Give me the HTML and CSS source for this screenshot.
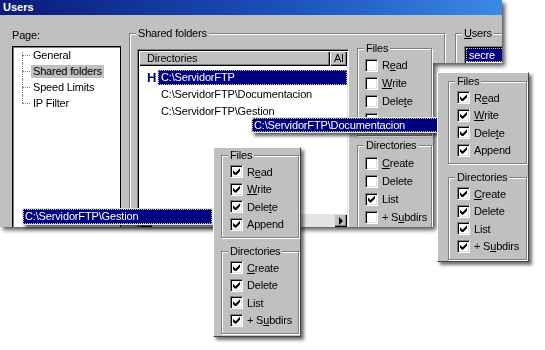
FILE: index.html
```html
<!DOCTYPE html>
<html lang="es">
<head>
  <meta charset="UTF-8">
  <title>Users</title>
  <link rel="stylesheet" href="styles.css">
</head>
<body>
  <div class="window-wrap">
    <div class="window">
      <div class="titlebar">Users</div>
      <div class="client">
        <div class="page-col">
          <div class="page-label">Page:</div>
          <ul class="tree">
            <li><span>General</span></li>
            <li><span class="current">Shared folders</span></li>
            <li><span>Speed Limits</span></li>
            <li><span>IP Filter</span></li>
          </ul>
        </div>

        <div class="group shared">
          <div class="group-title">Shared folders</div>
          <div class="shared-body">
            <div class="dirlist">
              <div class="dirlist-head">
                <div class="col-dir">Directories</div>
                <div class="col-alias">Al</div>
              </div>
              <div class="dirlist-rows">
                <div class="dir-row"><span class="home">H</span><span class="path selected">C:\ServidorFTP</span></div>
                <div class="dir-row"><span class="home"></span><span class="path">C:\ServidorFTP\Documentacion</span></div>
                <div class="dir-row"><span class="home"></span><span class="path">C:\ServidorFTP\Gestion</span></div>
              </div>
              <div class="hscroll">
                <div class="sb-btn"><span class="arrow-left"></span></div>
                <div class="sb-track"></div>
                <div class="sb-btn"><span class="arrow-right"></span></div>
              </div>
            </div>

            <div class="perms">
              <div class="group files">
                <div class="group-title">Files</div>
                <div class="check"><span class="cb"></span>R<u>e</u>ad</div>
                <div class="check"><span class="cb"></span><u>W</u>rite</div>
                <div class="check"><span class="cb"></span>Dele<u>t</u>e</div>
                <!-- append label is hidden under the dragged item -->
                <div class="check"><span class="cb"></span></div>
              </div>
              <div class="group dirs">
                <div class="group-title">Directories</div>
                <div class="check"><span class="cb"></span><u>C</u>reate</div>
                <div class="check"><span class="cb"></span>Delete</div>
                <div class="check"><span class="cb on"></span>List</div>
                <div class="check"><span class="cb"></span>+ S<u>u</u>bdirs</div>
              </div>
            </div>
          </div>
        </div>

        <div class="group users">
          <div class="group-title"><u>U</u>sers</div>
          <div class="userlist">
            <div class="user selected">secre</div>
          </div>
        </div>
      </div>
    </div>
  </div>

  <div class="popup popup-docs">C:\ServidorFTP\Documentacion</div>
  <div class="popup popup-gestion">C:\ServidorFTP\Gestion</div>

  <div class="panel panel-right">
    <div class="group">
      <div class="group-title">Files</div>
      <div class="check"><span class="cb on"></span>R<u>e</u>ad</div>
      <div class="check"><span class="cb on"></span><u>W</u>rite</div>
      <div class="check"><span class="cb on"></span>Dele<u>t</u>e</div>
      <div class="check"><span class="cb on"></span>Append</div>
    </div>
    <div class="group">
      <div class="group-title">Directories</div>
      <div class="check"><span class="cb on"></span><u>C</u>reate</div>
      <div class="check"><span class="cb on"></span>Delete</div>
      <div class="check"><span class="cb on"></span>List</div>
      <div class="check"><span class="cb on"></span>+ S<u>u</u>bdirs</div>
    </div>
  </div>

  <div class="panel panel-mid">
    <div class="group">
      <div class="group-title">Files</div>
      <div class="check"><span class="cb on"></span>R<u>e</u>ad</div>
      <div class="check"><span class="cb on"></span><u>W</u>rite</div>
      <div class="check"><span class="cb on"></span>Dele<u>t</u>e</div>
      <div class="check"><span class="cb on"></span>Append</div>
    </div>
    <div class="group">
      <div class="group-title">Directories</div>
      <div class="check"><span class="cb on"></span><u>C</u>reate</div>
      <div class="check"><span class="cb on"></span>Delete</div>
      <div class="check"><span class="cb on"></span>List</div>
      <div class="check"><span class="cb on"></span>+ S<u>u</u>bdirs</div>
    </div>
  </div>
</body>
</html>
```

FILE: styles.css
```css
* {
  box-sizing: border-box;
}

body {
  margin: 0;
  width: 545px;
  height: 350px;
  position: relative;
  overflow: hidden;
  background: #fff;
  color: #000;
  font-family: "Liberation Sans", Arial, sans-serif;
  font-size: 11px;
  letter-spacing: -0.2px;
}

u {
  text-decoration-thickness: 1px;
  text-underline-offset: 1px;
}

/* main dialog */
.window-wrap {
  width: 506px;
  filter: drop-shadow(3px 3px 2px rgba(0, 0, 0, 0.65));
}

.window {
  width: 502px;
  height: 227px;
  display: flex;
  flex-direction: column;
  background: #c0c0c0;
  clip-path: polygon(0 0, 502px 0, 502px 63px, 433px 63px, 433px 227px, 0 227px);
}

.titlebar {
  height: 15px;
  line-height: 15px;
  padding-left: 3px;
  color: #fff;
  font-weight: bold;
  letter-spacing: 0;
  background: linear-gradient(90deg, #0a1a78 0%, #1c55bf 60%, #3a8ae4 100%);
}

.client {
  flex: 1;
  display: flex;
  overflow: hidden;
}

.page-col {
  flex: none;
  width: 121px;
  padding: 14px 0 0 12px;
}

.page-label {
  height: 13px;
  line-height: 13px;
}

.tree {
  list-style: none;
  margin: 4px 0 0;
  padding: 0;
  width: 109px;
  height: 190px;
  background: #fff;
  border: 1px solid #000;
  box-shadow: inset 1px 1px 0 #808080;
}

.tree li {
  position: relative;
  height: 16px;
  line-height: 16px;
  padding-left: 18px;
}

.tree li::before {
  content: '';
  position: absolute;
  left: 9px;
  top: 8px;
  width: 8px;
  border-top: 1px dotted #808080;
}

.tree li::after {
  content: '';
  position: absolute;
  left: 9px;
  top: 0;
  bottom: 0;
  border-left: 1px dotted #808080;
}

.tree li:first-child::after {
  top: 5px;
}

.tree li:last-child::after {
  bottom: 8px;
}

.tree span {
  display: inline-block;
  line-height: 13px;
  padding: 0 2px;
}

.tree .current {
  background: #c0c0c0;
}

/* group boxes */
.group {
  border: 1px solid #808080;
  box-shadow: inset 1px 1px 0 #fff, 1px 1px 0 #fff;
}

.group-title {
  display: table;
  height: 13px;
  line-height: 13px;
  margin: -7px 0 0 6px;
  padding: 0 2px;
  background: #c0c0c0;
}

.shared {
  flex: none;
  width: 316px;
  height: 200px;
  margin: 18px 0 0 8px;
}

.shared-body {
  display: flex;
  padding-left: 7px;
}

/* directory list */
.dirlist {
  flex: none;
  width: 212px;
  height: 180px;
  margin-top: 9px;
  padding: 1px;
  display: flex;
  flex-direction: column;
  background: #fff;
  border: 1px solid;
  border-color: #808080 #fff #fff #808080;
  box-shadow: inset 1px 1px 0 #000, inset -1px -1px 0 #dfdfdf;
}

.dirlist-head {
  display: flex;
  height: 15px;
  line-height: 15px;
}

.dirlist-head div {
  background: #c0c0c0;
  box-shadow: inset 1px 1px 0 #fff, inset -1px -1px 0 #000, inset -2px -2px 0 #808080;
}

.col-dir {
  width: 191px;
  padding-left: 8px;
}

.col-alias {
  flex: 1;
  padding-left: 4px;
  overflow: hidden;
}

.dirlist-rows {
  flex: 1;
  padding-top: 4px;
}

.dir-row {
  display: flex;
  height: 17px;
  padding-left: 8px;
}

.home {
  width: 11px;
  flex: none;
  color: #000080;
  font-size: 13px;
  font-weight: bold;
  line-height: 15px;
}

.path {
  height: 15px;
  line-height: 15px;
  padding: 0 3px;
  letter-spacing: -0.15px;
}

.selected {
  flex: 1;
  color: #fff;
  background: #000080;
  outline: 1px dotted #c8c880;
  outline-offset: -1px;
}

.hscroll {
  display: flex;
  height: 13px;
}

.sb-btn {
  width: 13px;
  display: flex;
  align-items: center;
  justify-content: center;
  background: #c0c0c0;
  box-shadow: inset 1px 1px 0 #dfdfdf, inset -1px -1px 0 #000, inset -2px -2px 0 #808080;
}

.sb-track {
  flex: 1;
  background: #e4e4e4;
}

.arrow-right {
  border-left: 4px solid #000;
  border-top: 4px solid transparent;
  border-bottom: 4px solid transparent;
}

.arrow-left {
  border-right: 4px solid #000;
  border-top: 4px solid transparent;
  border-bottom: 4px solid transparent;
}

/* permission checkboxes */
.perms {
  flex: none;
  width: 75px;
  margin: 8px 0 0 8px;
}

.check {
  display: flex;
  align-items: center;
  height: 18px;
  padding-left: 7px;
  white-space: nowrap;
}

.group-title + .check {
  margin-top: 1px;
}

.files {
  padding-bottom: 7px;
}

.dirs {
  margin-top: 9px;
  height: 90px;
}

.dirs .group-title + .check {
  margin-top: 2px;
}

.cb {
  position: relative;
  flex: none;
  width: 13px;
  height: 13px;
  margin-right: 4px;
  background: #fff;
  border: 1px solid;
  border-color: #808080 #fff #fff #808080;
  box-shadow: inset 1px 1px 0 #000, inset -1px -1px 0 #dfdfdf;
}

.cb.on::after {
  content: '';
  position: absolute;
  left: 2px;
  top: 2px;
  width: 7px;
  height: 7px;
  background: #000;
  clip-path: polygon(0 2px, 2.5px 4.5px, 7px 0, 7px 3px, 3px 7px, 2px 7px, 0 5px);
}

/* users list */
.users {
  flex: none;
  width: 60px;
  height: 60px;
  margin: 18px 0 0 10px;
}

.userlist {
  width: 50px;
  height: 40px;
  margin: 6px 0 0 8px;
  padding: 1px;
  background: #fff;
  border: 1px solid;
  border-color: #808080 #fff #fff #808080;
  box-shadow: inset 1px 1px 0 #000;
}

.user {
  height: 14px;
  line-height: 14px;
  padding-left: 3px;
}

/* dragged items floating over the dialog */
.popup {
  position: absolute;
  height: 16px;
  line-height: 14px;
  padding: 0 2px;
  color: #fff;
  background: #000080;
  border: 1px solid #e0e0e0;
  outline: 1px dotted #c8c880;
  outline-offset: -2px;
  letter-spacing: -0.15px;
  box-shadow: 3px 3px 3px rgba(0, 0, 0, 0.6);
}

.popup-docs {
  left: 251px;
  top: 117px;
  width: 190px;
}

.popup-gestion {
  left: 22px;
  top: 208px;
  width: 191px;
  height: 17px;
  line-height: 15px;
}

.panel {
  position: absolute;
  height: 190px;
  background: #c0c0c0;
  border: 1px solid;
  border-color: #fff #404040 #404040 #fff;
  box-shadow: 3px 3px 3px rgba(0, 0, 0, 0.55);
}

.panel-right {
  left: 437px;
  top: 72px;
  width: 92px;
  padding: 8px 1px 0 10px;
}

.panel-mid {
  left: 213px;
  top: 147px;
  width: 88px;
  padding: 7px 1px 0 7px;
}

.panel .group {
  height: 83px;
}

.panel .group + .group {
  margin-top: 13px;
}

.panel .check {
  height: 17.5px;
  padding-left: 8px;
}
```
